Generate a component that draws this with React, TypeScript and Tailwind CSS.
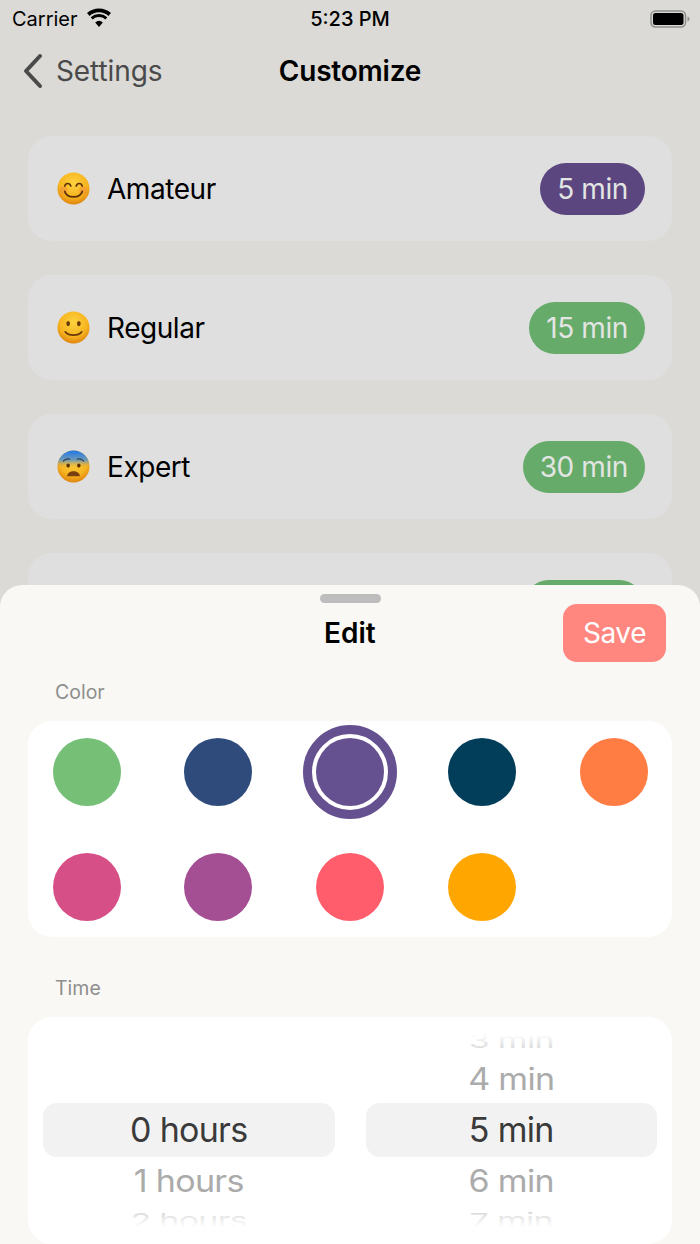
import React from "react";

function Face({ kind }: { kind: "smile" | "slight" | "fear" }) {
  const id = `g-${kind}`;
  return (
    <svg width="33" height="33" viewBox="0 0 34 34" className="shrink-0">
      <defs>
        <radialGradient id={id} cx="50%" cy="34%" r="68%">
          <stop offset="0%" stopColor="#fdd23f" />
          <stop offset="65%" stopColor="#f6b41f" />
          <stop offset="100%" stopColor="#de7f0e" />
        </radialGradient>
        <linearGradient id="fear-top" x1="0" y1="0" x2="0" y2="1">
          <stop offset="0%" stopColor="#1f78ea" />
          <stop offset="30%" stopColor="#6f9ab8" />
          <stop offset="55%" stopColor="#f3b02c" stopOpacity="0" />
        </linearGradient>
      </defs>
      <circle cx="17" cy="17" r="16.500" fill={`url(#${id})`} />
      {kind === "smile" && (
        <>
          <circle cx="7" cy="19" r="4" fill="#f08a3c" opacity="0.5" />
          <circle cx="27" cy="19" r="4" fill="#f08a3c" opacity="0.5" />
          <path d="M8 14.500c1-3.600 5.200-3.600 6.200 0M19.800 14.500c1-3.600 5.200-3.600 6.200 0" fill="none" stroke="#5e3208" strokeWidth="1.700" strokeLinecap="round" />
          <path d="M8 20c2 7.500 16 7.500 18 0" fill="none" stroke="#5e3208" strokeWidth="1.800" strokeLinecap="round" />
        </>
      )}
      {kind === "slight" && (
        <>
          <ellipse cx="11.500" cy="13" rx="1.900" ry="2.700" fill="#6b3a0a" />
          <ellipse cx="22.500" cy="13" rx="1.900" ry="2.700" fill="#6b3a0a" />
          <path d="M8.500 21.500c3.500 4.400 13.500 4.400 17 0" fill="none" stroke="#6b3a0a" strokeWidth="1.700" strokeLinecap="round" />
        </>
      )}
      {kind === "fear" && (
        <>
          <circle cx="17" cy="17" r="16.500" fill="url(#fear-top)" />
          <path d="M6.500 11.500c2-2 4.500-2.600 6.500-2.200M27.500 11.500c-2-2-4.500-2.600-6.500-2.200" fill="none" stroke="#33424f" strokeWidth="1.300" strokeLinecap="round" />
          <ellipse cx="11.500" cy="16" rx="1.800" ry="2.200" fill="#5e3208" />
          <ellipse cx="22.500" cy="16" rx="1.800" ry="2.200" fill="#5e3208" />
          <path d="M10.500 27c0-6.800 13-6.800 13 0z" fill="#7a3f10" />
        </>
      )}
    </svg>
  );
}

function Row({ face, name, time, pill }: { face: "smile" | "slight" | "fear"; name: string; time: string; pill: string }) {
  return (
    <div className="flex h-[105px] shrink-0 items-center justify-between rounded-[24px] bg-[#dfdfdf] pl-[29px] pr-[27px]">
      <div className="flex items-center gap-[17px]">
        <Face kind={face} />
        <span className="text-[28px] tracking-[-0.45px] text-black">{name}</span>
      </div>
      <span className={`flex h-[52px] items-center rounded-full px-[17px] text-[28px] tracking-[-0.4px] text-[#e3e5e3] ${pill}`}>{time}</span>
    </div>
  );
}

function Swatch({ color, selected }: { color: string; selected?: boolean }) {
  return (
    <div className="relative h-[68px] w-[68px]">
      <span className={`block h-[68px] w-[68px] rounded-full ${color}`} />
      {selected && (
        <span className="absolute left-1/2 top-1/2 h-[94px] w-[94px] -translate-x-1/2 -translate-y-1/2 rounded-full border-[9px] border-[#65518f] bg-white p-[4px]">
          <span className="block h-full w-full rounded-full bg-[#65518f]" />
        </span>
      )}
    </div>
  );
}

function Wheel({ items }: { items: { label: string; cls: string }[] }) {
  return (
    <div className="relative h-full flex-1">
      <div className="absolute inset-x-0 top-[69px] h-[54px] rounded-[14px] bg-[#f2f2f2]" />
      {items.map((it) => (
        <div key={it.label} className={`absolute inset-x-0 text-center text-[34px] leading-[40px] tracking-[-0.7px] ${it.cls}`}>
          {it.label}
        </div>
      ))}
    </div>
  );
}

export default function App() {
  return (
    <div className="relative h-[1244px] w-[700px] overflow-hidden bg-[#dbdad6] font-['Inter','Liberation_Sans',sans-serif]">
      <div className="flex h-[38px] items-center justify-between pl-[12px] pr-[8px]">
        <div className="flex items-center gap-[8px]">
          <span className="text-[20px] text-black">Carrier</span>
          <svg width="26" height="20" viewBox="0 0 26 20" className="-mt-[2px]">
            <path d="M13 19 9.200 14.400a6 6 0 0 1 7.600 0z" fill="#000" />
            <path d="M3.600 7.900 1 5A18 18 0 0 1 25 5l-2.600 2.900A14.200 14.200 0 0 0 3.600 7.900z" fill="#000" />
            <path d="M6.600 11.500 4.700 9.200a12.600 12.600 0 0 1 16.600 0l-1.900 2.300a9.800 9.800 0 0 0-12.800 0z" fill="#000" />
          </svg>
        </div>
        <span className="absolute left-0 right-0 text-center text-[20px] font-medium text-black">5:23 PM</span>
        <svg width="42" height="20" viewBox="0 0 42 20">
          <rect x="1" y="2" width="34.500" height="16" rx="4.500" fill="none" stroke="#8f8e8b" strokeWidth="1.500" />
          <rect x="3" y="4" width="30.500" height="12" rx="2.500" fill="#000" />
          <path d="M37.500 7.500c1.400.4 2 1.300 2 2.500s-.6 2.100-2 2.500z" fill="#8f8e8b" />
        </svg>
      </div>
      <div className="relative flex h-[66px] items-center pl-[22px]">
        <svg width="22" height="36" viewBox="0 0 22 36" className="shrink-0">
          <path d="M18 3 4 18l14 15" fill="none" stroke="#4a4a4a" strokeWidth="4" strokeLinecap="round" strokeLinejoin="round" />
        </svg>
        <span className="ml-[12px] text-[28px] tracking-[-0.1px] text-[#4a4a4a]">Settings</span>
        <span className="absolute inset-x-0 text-center text-[28px] font-semibold tracking-[-0.2px] text-black">Customize</span>
      </div>
      <div className="mt-[32px] flex flex-col gap-[34px] px-[28px]">
        <Row face="smile" name="Amateur" time="5 min" pill="bg-[#5b4680]" />
        <Row face="slight" name="Regular" time="15 min" pill="bg-[#66ab6a]" />
        <Row face="fear" name="Expert" time="30 min" pill="bg-[#66ab6a]" />
        <Row face="fear" name="Master" time="60 min" pill="bg-[#66ab6a]" />
      </div>

      <div className="absolute inset-x-0 bottom-0 top-[585px] rounded-t-[22px] bg-[#f9f8f4]">
        <div className="mx-auto mt-[9px] h-[9px] w-[61px] rounded-full bg-[#bdbdbd]" />
        <div className="mt-[1px] flex h-[58px] items-center pl-[324px] pr-[34px]">
          <span className="text-[28px] font-semibold text-black">Edit</span>
          <button className="ml-auto h-[58px] w-[103px] rounded-[14px] bg-[#ff8780] text-[28px] tracking-[-0.4px] text-white">Save</button>
        </div>
        <div className="ml-[55px] mt-[18px] text-[19.5px] leading-[24px] text-[#8e8e8e]">Color</div>
        <div className="mx-[28px] mt-[17px] grid h-[216px] grid-cols-[repeat(5,68px)] content-start justify-between gap-y-[47px] rounded-[24px] bg-white pl-[24.5px] pr-[24.500px] pt-[17px]">
          <Swatch color="bg-[#75c076]" />
          <Swatch color="bg-[#2e4b7c]" />
          <Swatch color="bg-[#65518f]" selected />
          <Swatch color="bg-[#023e5a]" />
          <Swatch color="bg-[#ff7c43]" />
          <Swatch color="bg-[#d74f87]" />
          <Swatch color="bg-[#a44f94]" />
          <Swatch color="bg-[#ff5c6c]" />
          <Swatch color="bg-[#ffa600]" />
        </div>
        <div className="ml-[55px] mt-[39px] text-[19.5px] leading-[24px] text-[#8e8e8e]">Time</div>
        <div className="relative mx-[28px] mt-[17px] h-[227px] rounded-[24px] bg-white px-[15px] pt-[17px]">
          <div className="relative flex h-[193px] gap-[31px] overflow-hidden">
            <Wheel
              items={[
                { label: "0 hours", cls: "top-[76px] text-[#3a3a3a]" },
                { label: "1 hours", cls: "top-[127px] text-[#ababab] scale-y-90" },
                { label: "2 hours", cls: "top-[167px] text-[#c4c4c4] scale-y-[0.6]" },
              ]}
            />
            <Wheel
              items={[
                { label: "3 min", cls: "-top-[13px] text-[#c4c4c4] scale-y-[0.6]" },
                { label: "4 min", cls: "top-[25px] text-[#ababab] scale-y-90" },
                { label: "5 min", cls: "top-[76px] text-[#3a3a3a]" },
                { label: "6 min", cls: "top-[127px] text-[#ababab] scale-y-90" },
                { label: "7 min", cls: "top-[167px] text-[#c4c4c4] scale-y-[0.6]" },
              ]}
            />
            <div className="absolute inset-x-0 top-0 h-[24px] bg-gradient-to-b from-white to-transparent" />
            <div className="absolute inset-x-0 bottom-0 h-[24px] bg-gradient-to-t from-white to-transparent" />
          </div>
        </div>
      </div>
    </div>
  );
}
